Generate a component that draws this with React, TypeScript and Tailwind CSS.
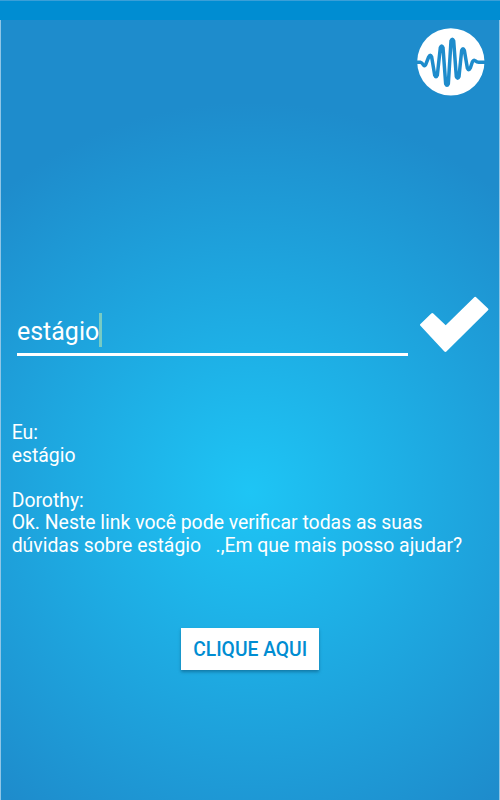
function WaveIcon() {
  return (
    <svg viewBox="51 84 204 204" className="h-[68px] w-[68px]" fill="none">
      <circle cx="152.5" cy="185.5" r="101" fill="#fff" />
      <path
        d="M51 187H62Q66 188 68 192Q73 201 77 194L86 171Q91 161 95 171L104 225Q108 235 112 225L121 143Q125 133 129 143L137 251Q141 260 145 251L153 123Q157 113 161 123L169 230Q173 240 177 230L185 151Q189 141 193 151L202 204Q206 214 211 204L217 186Q220 179 225 182Q231 187 236 187H255"
        stroke="#1e8ccc"
        strokeWidth="10.5"
        strokeLinejoin="round"
      />
    </svg>
  );
}

function CheckIcon() {
  return (
    <svg viewBox="0 0 72 60" className="h-[60px] w-[72px]">
      <path
        d="M3.2 30.2L14.3 19.5Q15.3 18.5 16.3 19.5L28.7 31.2L57 3.4Q58.2 2.3 59.4 3.4L71 14.4Q72 15.3 71 16.3L29.4 57.6Q28.4 58.5 27.4 57.6L3.2 31.5Q2.6 30.8 3.2 30.2Z"
        fill="#fff"
      />
    </svg>
  );
}

export default function App() {
  return (
    <div className="flex h-[800px] w-[500px] flex-col overflow-hidden bg-[#1e8ccc] font-['Roboto',sans-serif] text-white">
      <header className="h-5 shrink-0 border-t border-[#3a9fd8] bg-[#008dd2]" />
      <main className="flex flex-1 flex-col border-x border-[#8fc5e6] bg-[radial-gradient(circle_390px_at_249px_472px,#1ec5f5_0%,#1e8ccc_100%)]">
        <div className="flex justify-end pt-2 pr-[14px]">
          <WaveIcon />
        </div>
        <div className="mt-[198px] flex h-[62px] items-start justify-between pr-[10px] pl-4">
          <div className="mt-[18px] flex h-[44px] w-[391px] items-start border-b-[3px] border-white">
            <span className="mt-[4px] w-[82px] origin-left scale-x-[0.96] text-[26px] leading-[30px]">estágio</span>
            <span className="mt-px h-[34px] w-[3px] bg-[#78cbc3]" />
          </div>
          <CheckIcon />
        </div>
        <div className="mt-[65px] origin-left scale-x-[0.97] pl-[11px] text-[20px] leading-[22.5px] whitespace-pre">
          <p>Eu:</p>
          <p>estágio</p>
          <p className="mt-[22.5px]">Dorothy:</p>
          <p>Ok. Neste link você pode verificar todas as suas</p>
          <p>{"dúvidas sobre estágio   .,Em que mais posso ajudar?"}</p>
        </div>
        <button className="mt-[72px] h-[42px] w-[138px] self-center bg-white text-[20px] font-medium text-[#008dd2] shadow-[0_2px_3px_rgba(0,50,80,0.4)]">
          <span className="inline-block scale-x-[0.963]">CLIQUE AQUI</span>
        </button>
      </main>
    </div>
  );
}
